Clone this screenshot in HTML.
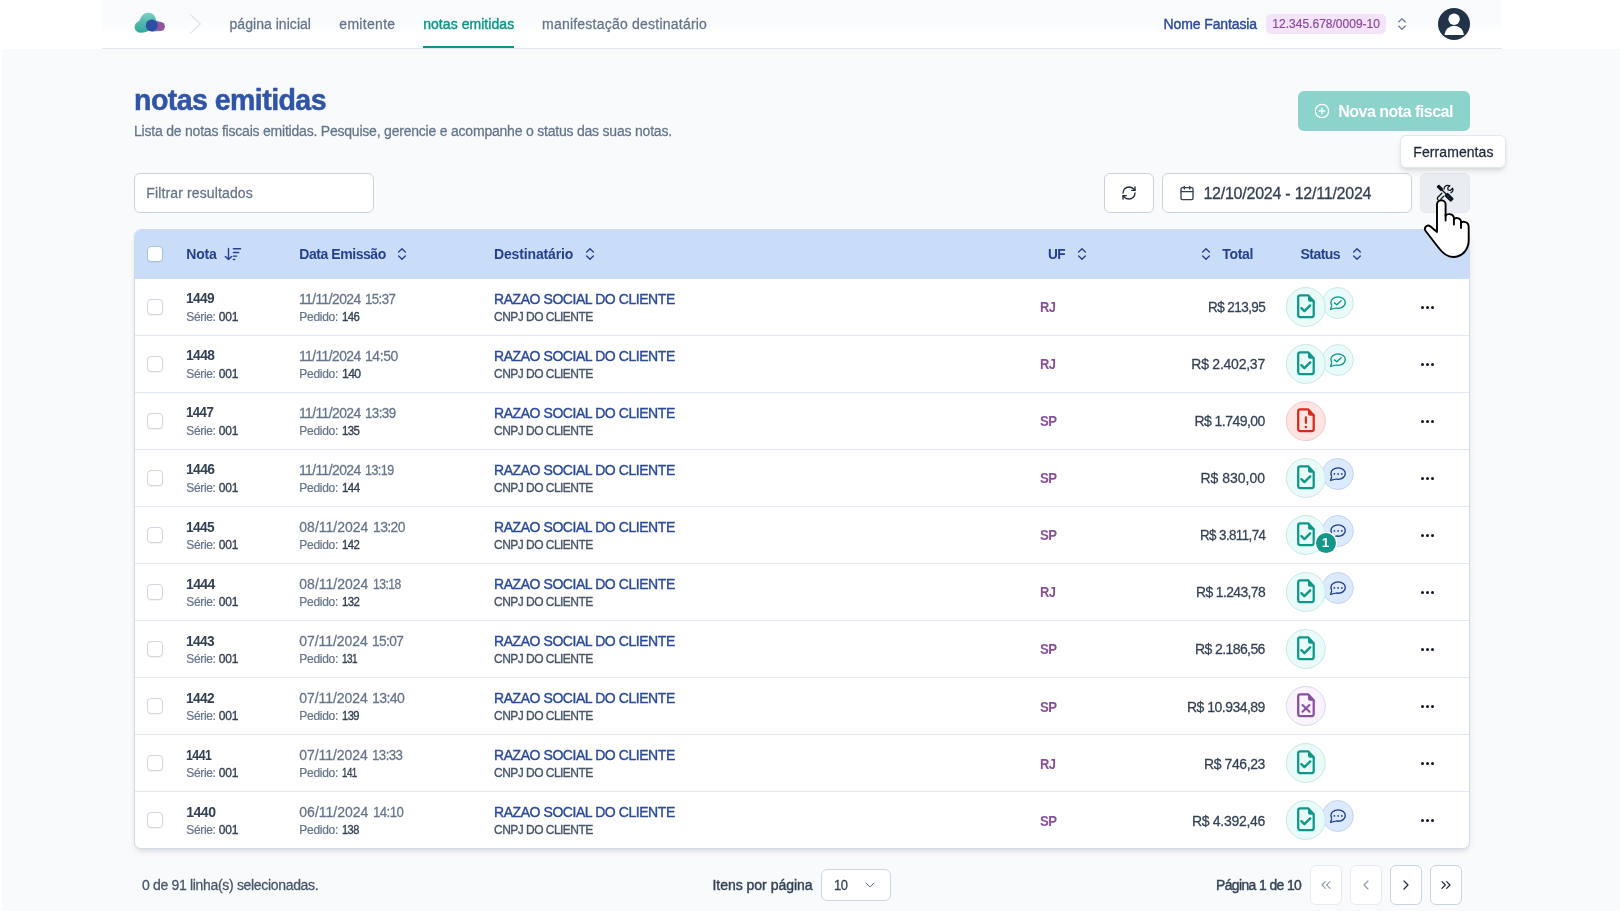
<!DOCTYPE html>
<html lang="pt-BR"><head><meta charset="utf-8"><title>notas emitidas</title>
<style>
*{box-sizing:border-box;margin:0;padding:0}
html,body{width:1620px;height:911px;overflow:hidden;background:#f8fafc;font-family:"Liberation Sans",sans-serif}
#pg{position:absolute;left:0;top:0;width:1620px;height:49px;background:#fff}
#pgl{position:absolute;left:0;top:0;width:2px;height:910px;background:#fff}
#hd{position:absolute;left:102px;top:0;width:1400px;height:49px;background:linear-gradient(#f9fafc 0,#f9fbfd 44%,#fcfdfe 58%,#ffffff 68%);border-bottom:1px solid #e2e8f0}
.t{position:absolute;white-space:nowrap;line-height:1}
.i{position:absolute;overflow:visible}
.box{position:absolute;background:#fff;border:1px solid #c9d3e0;border-radius:6px}
#tbl{position:absolute;left:134px;top:229px;width:1336px;height:620px;background:#fff;border:1px solid #d2dae6;border-radius:7px;box-shadow:0 4px 6px -1px rgba(15,23,42,.08),0 2px 4px -2px rgba(15,23,42,.10);overflow:hidden}
#thd{position:absolute;left:0;top:0;width:100%;height:49px;background:#c9ddf9}
.rb{position:absolute;left:135px;width:1334px;height:1px;background:#e2e8f0}
.cb{position:absolute;width:16px;height:16px;border:1px solid #cfd6e0;border-radius:4px;background:#fff;box-shadow:0 1px 1px rgba(0,0,0,.05)}
.c1{position:absolute;width:40px;height:40px;border-radius:50%;border:1px solid}
.c2{position:absolute;width:31.5px;height:31.5px;border-radius:50%;border:1px solid}
.dot{position:absolute;width:3px;height:3px;border-radius:50%;background:#0f172a}
.bdg{position:absolute;will-change:transform;width:20px;height:20px;color:#fff;font-size:13.500px;font-weight:700;line-height:20px;text-align:center;text-indent:-1px}
</style></head><body>
<div id="pg"></div><div id="pgl"></div>
<div id="hd"></div>
<!-- logo -->
<svg class="i" style="left:132px;top:10px" width="38" height="26" viewBox="132 10 38 26">
<defs><linearGradient id="lg1" x1="0" y1="0" x2="0" y2="1"><stop offset="0" stop-color="#7fd0c7"/><stop offset="0.450" stop-color="#56b9b0"/><stop offset="1" stop-color="#2fa79c"/></linearGradient></defs>
<path d="M148.400,12.800 C152.700,12.800 156,16.200 156,20.400 C156,24 154,27 150.500,29 C148.500,31.500 145,32.800 140.800,32.800 C137.300,32.800 134.600,30.200 134.600,27 C134.600,24.500 136,22.800 138,21.800 C139.500,21 140,19.500 140.600,18 C141.800,14.800 144.800,12.800 148.400,12.800Z" fill="url(#lg1)"/>
<path d="M151.500,19.600 L161,22 L161,31.100 L151.500,31.400Z" fill="#5f7fbd"/>
<circle cx="160.400" cy="26.500" r="4.600" fill="#94559f"/>
<circle cx="151.800" cy="25.400" r="6" fill="#2f4da2"/>
</svg>
<svg class="i" style="left:186px;top:12px" width="20" height="24" viewBox="186 12 20 24" fill="none" stroke="#e2e8f0" stroke-width="1.6" stroke-linecap="round" stroke-linejoin="round"><path d="M190.800,14.800 L200.300,23.900 L190.800,33"/></svg>
<div style="position:absolute;left:423px;top:46px;width:91px;height:2px;background:#0d9488"></div>
<!-- cnpj badge -->
<div style="position:absolute;left:1266px;top:14px;width:120px;height:20px;border-radius:5px;background:#f3e4fb"></div>
<svg class="i" style="left:1394px;top:16px;color:#64748b;" width="16" height="16" viewBox="0 0 24 24" fill="none" stroke="currentColor" stroke-width="1.7" stroke-linecap="round" stroke-linejoin="round"><path d="m7 15 5 5 5-5"/><path d="m7 9 5-5 5 5"/></svg>
<!-- avatar -->
<svg class="i" style="left:1438px;top:8px" width="32" height="32" viewBox="0 0 32 32"><circle cx="16" cy="16" r="16" fill="#233347"/><circle cx="16.100" cy="11.300" r="5.700" fill="#fff"/><path d="M6.500,27 a9.700,9.200 0 0 1 19.400,0z" fill="#fff"/></svg>
<!-- new button -->
<div style="position:absolute;left:1298px;top:91px;width:172px;height:40px;border-radius:6px;background:#8bd3cb"></div>
<svg class="i" style="left:1314px;top:103.4px;color:#ffffff;" width="16" height="16" viewBox="0 0 24 24" fill="none" stroke="currentColor" stroke-width="1.9" stroke-linecap="round" stroke-linejoin="round"><circle cx="12" cy="12" r="10"/><path d="M8 12h8"/><path d="M12 8v8"/></svg>
<!-- filter -->
<div class="box" style="left:134px;top:173px;width:240px;height:40px"></div>
<div class="box" style="left:1104px;top:173px;width:50px;height:40px"></div>
<svg class="i" style="left:1121px;top:185px;color:#1e293b;" width="16" height="16" viewBox="0 0 24 24" fill="none" stroke="currentColor" stroke-width="2" stroke-linecap="round" stroke-linejoin="round"><path d="M3 12a9 9 0 0 1 9-9 9.75 9.75 0 0 1 6.74 2.74L21 8"/><path d="M21 3v5h-5"/><path d="M21 12a9 9 0 0 1-9 9 9.75 9.75 0 0 1-6.74-2.74L3 16"/><path d="M8 16H3v5"/></svg>
<div class="box" style="left:1162px;top:173px;width:250px;height:40px"></div>
<svg class="i" style="left:1179px;top:185px;color:#334155;" width="16" height="16" viewBox="0 0 24 24" fill="none" stroke="currentColor" stroke-width="2" stroke-linecap="round" stroke-linejoin="round"><path d="M8 2v4"/><path d="M16 2v4"/><rect width="18" height="18" x="3" y="4" rx="2"/><path d="M3 10h18"/></svg>
<div style="position:absolute;left:1420px;top:173px;width:50px;height:40px;border-radius:6px;background:#e9edf2;border:1px dotted #dde3eb"></div>
<!-- tools icon -->
<svg class="i" style="left:1437px;top:185px" width="17" height="17" viewBox="0 0 17 17" fill="#0b1220" stroke="none">
<rect x="-3.300" y="-1.750" width="6.600" height="3.500" rx="1" transform="translate(2.900,2.950) rotate(45)"/>
<path d="M5,5 L9.500,9.500" stroke="#0b1220" stroke-width="1.300" fill="none"/>
<rect x="-4.600" y="-2.350" width="9.200" height="4.700" rx="1.200" transform="translate(12.100,12.300) rotate(45)"/>
<circle cx="11.100" cy="11.400" r="0.550" fill="#5b6b82"/><circle cx="13" cy="13.300" r="0.550" fill="#5b6b82"/>
<path d="M7.100,4.100 C6.900,1.900 8.700,0.300 10.800,0.300 C11.600,0.300 12.300,0.400 12.900,0.700 L10.700,2.900 L11.200,5 L13.300,5.500 L15.600,3.300 C16.300,5 15.600,6.900 13.900,7.800" stroke="#0b1220" stroke-width="1.250" fill="none" stroke-linecap="round" stroke-linejoin="round"/>
<path d="M4.800,8.200 L0.700,12.500 C0,13.400 0.300,14.400 1.200,15 M6.700,11.300 L3.700,14.100" stroke="#0b1220" stroke-width="1.250" fill="none" stroke-linecap="round"/>
</svg>
<!-- table -->
<div id="tbl"><div id="thd"></div></div>
<div class="cb" style="left:147px;top:246px;border-color:#a7c3cf"></div>
<svg class="i" style="left:220px;top:244px" width="26" height="20" viewBox="220 244 26 20" fill="none" stroke="#25408f" stroke-width="1.400" stroke-linecap="round" stroke-linejoin="round"><path d="M228.500 248.400V259.400 M225.400 256.500l3.100 3.100 3.100-3.100 M233.400 248.800h7.200 M233.400 252.500h5.300 M233.400 256.100h3.300 M233.400 259.500h1.300"/></svg>
<svg class="i" style="left:394px;top:246px;color:#25408f;" width="16" height="16" viewBox="0 0 24 24" fill="none" stroke="currentColor" stroke-width="2" stroke-linecap="round" stroke-linejoin="round"><path d="m7 15 5 5 5-5"/><path d="m7 9 5-5 5 5"/></svg>
<svg class="i" style="left:582px;top:246px;color:#25408f;" width="16" height="16" viewBox="0 0 24 24" fill="none" stroke="currentColor" stroke-width="2" stroke-linecap="round" stroke-linejoin="round"><path d="m7 15 5 5 5-5"/><path d="m7 9 5-5 5 5"/></svg>
<svg class="i" style="left:1074px;top:246px;color:#25408f;" width="16" height="16" viewBox="0 0 24 24" fill="none" stroke="currentColor" stroke-width="2" stroke-linecap="round" stroke-linejoin="round"><path d="m7 15 5 5 5-5"/><path d="m7 9 5-5 5 5"/></svg>
<svg class="i" style="left:1198px;top:246px;color:#25408f;" width="16" height="16" viewBox="0 0 24 24" fill="none" stroke="currentColor" stroke-width="2" stroke-linecap="round" stroke-linejoin="round"><path d="m7 15 5 5 5-5"/><path d="m7 9 5-5 5 5"/></svg>
<svg class="i" style="left:1349px;top:246px;color:#25408f;" width="16" height="16" viewBox="0 0 24 24" fill="none" stroke="currentColor" stroke-width="2" stroke-linecap="round" stroke-linejoin="round"><path d="m7 15 5 5 5-5"/><path d="m7 9 5-5 5 5"/></svg>
<div class="cb" style="left:147px;top:298.90px"></div>
<svg class="i" style="left:1280px;top:281.80px" width="80" height="50" viewBox="-25.800 -25 80 50"><g transform="translate(32,-4)"><circle r="15.500" fill="#e9fbf8" stroke="#cfe6e6" stroke-width="1"/><g transform="translate(0.300,-0.400)"><ellipse cx="0" cy="0" rx="7.200" ry="5.700" fill="none" stroke="#0d9488" stroke-width="1.350"/><path d="M-6.200,2.600 L-7.600,6.900 L-2.900,5.500" fill="#e9fbf8" stroke="#0d9488" stroke-width="1.250" stroke-linejoin="round" stroke-linecap="round"/><path d="M-5.900,2 L-2.600,5" stroke="#e9fbf8" stroke-width="1.600" fill="none"/><path d="M-3.700,0.300 L-1.300,2.200 L3,-1.800" fill="none" stroke="#0d9488" stroke-width="1.350" stroke-linecap="round" stroke-linejoin="round"/></g></g><circle r="19.500" fill="#e9fbf8" stroke="#cde6e6" stroke-width="1"/><path d="M2.300,-11.700 H-5.600 a2,2 0 0 0 -2,2 V8.100 a2,2 0 0 0 2,2 H5.900 a2,2 0 0 0 2,-2 V-5.700 Z" fill="none" stroke="#11968a" stroke-width="2.250" stroke-linejoin="round"/><path d="M2.200,-12.300 L8.700,-5.700 V-5.300 H4 a1.800,1.800 0 0 1 -1.800,-1.800 Z" fill="#11968a"/><path d="M-4.400,1.200 L-1.400,4.100 L4.400,-1.600" fill="none" stroke="#11968a" stroke-width="2.400" stroke-linecap="round" stroke-linejoin="round"/></svg>
<div class="dot" style="left:1420.50px;top:306px"></div>
<div class="dot" style="left:1425.50px;top:306px"></div>
<div class="dot" style="left:1430.50px;top:306px"></div>
<div class="rb" style="top:334.78px"></div>
<div class="cb" style="left:147px;top:355.93px"></div>
<svg class="i" style="left:1280px;top:338.83px" width="80" height="50" viewBox="-25.800 -25 80 50"><g transform="translate(32,-4)"><circle r="15.500" fill="#e9fbf8" stroke="#cfe6e6" stroke-width="1"/><g transform="translate(0.300,-0.400)"><ellipse cx="0" cy="0" rx="7.200" ry="5.700" fill="none" stroke="#0d9488" stroke-width="1.350"/><path d="M-6.200,2.600 L-7.600,6.900 L-2.900,5.500" fill="#e9fbf8" stroke="#0d9488" stroke-width="1.250" stroke-linejoin="round" stroke-linecap="round"/><path d="M-5.900,2 L-2.600,5" stroke="#e9fbf8" stroke-width="1.600" fill="none"/><path d="M-3.700,0.300 L-1.300,2.200 L3,-1.800" fill="none" stroke="#0d9488" stroke-width="1.350" stroke-linecap="round" stroke-linejoin="round"/></g></g><circle r="19.500" fill="#e9fbf8" stroke="#cde6e6" stroke-width="1"/><path d="M2.300,-11.700 H-5.600 a2,2 0 0 0 -2,2 V8.100 a2,2 0 0 0 2,2 H5.900 a2,2 0 0 0 2,-2 V-5.700 Z" fill="none" stroke="#11968a" stroke-width="2.250" stroke-linejoin="round"/><path d="M2.200,-12.300 L8.700,-5.700 V-5.300 H4 a1.800,1.800 0 0 1 -1.800,-1.800 Z" fill="#11968a"/><path d="M-4.400,1.200 L-1.400,4.100 L4.400,-1.600" fill="none" stroke="#11968a" stroke-width="2.400" stroke-linecap="round" stroke-linejoin="round"/></svg>
<div class="dot" style="left:1420.50px;top:363px"></div>
<div class="dot" style="left:1425.50px;top:363px"></div>
<div class="dot" style="left:1430.50px;top:363px"></div>
<div class="rb" style="top:391.81px"></div>
<div class="cb" style="left:147px;top:412.96px"></div>
<svg class="i" style="left:1280px;top:395.86px" width="80" height="50" viewBox="-25.800 -25 80 50"><circle r="19.500" fill="#ffe4e4" stroke="#f1c9cb" stroke-width="1"/><path d="M2.300,-11.700 H-5.600 a2,2 0 0 0 -2,2 V8.100 a2,2 0 0 0 2,2 H5.900 a2,2 0 0 0 2,-2 V-5.700 Z" fill="none" stroke="#d42a1c" stroke-width="2.250" stroke-linejoin="round"/><path d="M2.200,-12.300 L8.700,-5.700 V-5.300 H4 a1.800,1.800 0 0 1 -1.800,-1.800 Z" fill="#d42a1c"/><path d="M0.100,-3.600 V2" fill="none" stroke="#d42a1c" stroke-width="2.100" stroke-linecap="round"/><circle cx="0.100" cy="5.900" r="1.250" fill="#d42a1c"/></svg>
<div class="dot" style="left:1420.50px;top:420px"></div>
<div class="dot" style="left:1425.50px;top:420px"></div>
<div class="dot" style="left:1430.50px;top:420px"></div>
<div class="rb" style="top:448.84px"></div>
<div class="cb" style="left:147px;top:469.99px"></div>
<svg class="i" style="left:1280px;top:452.89px" width="80" height="50" viewBox="-25.800 -25 80 50"><g transform="translate(32,-4)"><circle r="15.500" fill="#dbeafe" stroke="#c6d4ea" stroke-width="1"/><g transform="translate(0.300,-0.400)"><ellipse cx="0" cy="0" rx="7.200" ry="5.700" fill="none" stroke="#1e3a8a" stroke-width="1.350"/><path d="M-6.200,2.600 L-7.600,6.900 L-2.900,5.500" fill="#dbeafe" stroke="#1e3a8a" stroke-width="1.250" stroke-linejoin="round" stroke-linecap="round"/><path d="M-5.900,2 L-2.600,5" stroke="#dbeafe" stroke-width="1.600" fill="none"/><circle cx="-3.7" cy="0.300" r="0.850" fill="#1e3a8a"/><circle cx="0" cy="0.300" r="0.850" fill="#1e3a8a"/><circle cx="3.7" cy="0.300" r="0.850" fill="#1e3a8a"/></g></g><circle r="19.500" fill="#e9fbf8" stroke="#cde6e6" stroke-width="1"/><path d="M2.300,-11.700 H-5.600 a2,2 0 0 0 -2,2 V8.100 a2,2 0 0 0 2,2 H5.900 a2,2 0 0 0 2,-2 V-5.700 Z" fill="none" stroke="#11968a" stroke-width="2.250" stroke-linejoin="round"/><path d="M2.200,-12.300 L8.700,-5.700 V-5.300 H4 a1.800,1.800 0 0 1 -1.800,-1.800 Z" fill="#11968a"/><path d="M-4.400,1.200 L-1.400,4.100 L4.400,-1.600" fill="none" stroke="#11968a" stroke-width="2.400" stroke-linecap="round" stroke-linejoin="round"/></svg>
<div class="dot" style="left:1420.50px;top:477px"></div>
<div class="dot" style="left:1425.50px;top:477px"></div>
<div class="dot" style="left:1430.50px;top:477px"></div>
<div class="rb" style="top:505.87px"></div>
<div class="cb" style="left:147px;top:527.02px"></div>
<svg class="i" style="left:1280px;top:509.92px" width="80" height="50" viewBox="-25.800 -25 80 50"><g transform="translate(32,-4)"><circle r="15.500" fill="#dbeafe" stroke="#c6d4ea" stroke-width="1"/><g transform="translate(0.300,-0.400)"><ellipse cx="0" cy="0" rx="7.200" ry="5.700" fill="none" stroke="#1e3a8a" stroke-width="1.350"/><path d="M-6.200,2.600 L-7.600,6.900 L-2.900,5.500" fill="#dbeafe" stroke="#1e3a8a" stroke-width="1.250" stroke-linejoin="round" stroke-linecap="round"/><path d="M-5.900,2 L-2.600,5" stroke="#dbeafe" stroke-width="1.600" fill="none"/><circle cx="-3.7" cy="0.300" r="0.850" fill="#1e3a8a"/><circle cx="0" cy="0.300" r="0.850" fill="#1e3a8a"/><circle cx="3.7" cy="0.300" r="0.850" fill="#1e3a8a"/></g></g><circle r="19.500" fill="#e9fbf8" stroke="#cde6e6" stroke-width="1"/><path d="M2.300,-11.700 H-5.600 a2,2 0 0 0 -2,2 V8.100 a2,2 0 0 0 2,2 H5.900 a2,2 0 0 0 2,-2 V-5.700 Z" fill="none" stroke="#11968a" stroke-width="2.250" stroke-linejoin="round"/><path d="M2.200,-12.300 L8.700,-5.700 V-5.300 H4 a1.800,1.800 0 0 1 -1.800,-1.800 Z" fill="#11968a"/><path d="M-4.400,1.200 L-1.400,4.100 L4.400,-1.600" fill="none" stroke="#11968a" stroke-width="2.400" stroke-linecap="round" stroke-linejoin="round"/><circle cx="20.200" cy="8.100" r="11.300" fill="#fff"/><circle cx="20.200" cy="8.100" r="10" fill="#14968a"/></svg>
<div class="bdg" style="left:1316px;top:533.02px">1</div>
<div class="dot" style="left:1420.50px;top:534px"></div>
<div class="dot" style="left:1425.50px;top:534px"></div>
<div class="dot" style="left:1430.50px;top:534px"></div>
<div class="rb" style="top:562.90px"></div>
<div class="cb" style="left:147px;top:584.05px"></div>
<svg class="i" style="left:1280px;top:566.95px" width="80" height="50" viewBox="-25.800 -25 80 50"><g transform="translate(32,-4)"><circle r="15.500" fill="#dbeafe" stroke="#c6d4ea" stroke-width="1"/><g transform="translate(0.300,-0.400)"><ellipse cx="0" cy="0" rx="7.200" ry="5.700" fill="none" stroke="#1e3a8a" stroke-width="1.350"/><path d="M-6.200,2.600 L-7.600,6.900 L-2.900,5.500" fill="#dbeafe" stroke="#1e3a8a" stroke-width="1.250" stroke-linejoin="round" stroke-linecap="round"/><path d="M-5.900,2 L-2.600,5" stroke="#dbeafe" stroke-width="1.600" fill="none"/><circle cx="-3.7" cy="0.300" r="0.850" fill="#1e3a8a"/><circle cx="0" cy="0.300" r="0.850" fill="#1e3a8a"/><circle cx="3.7" cy="0.300" r="0.850" fill="#1e3a8a"/></g></g><circle r="19.500" fill="#e9fbf8" stroke="#cde6e6" stroke-width="1"/><path d="M2.300,-11.700 H-5.600 a2,2 0 0 0 -2,2 V8.100 a2,2 0 0 0 2,2 H5.900 a2,2 0 0 0 2,-2 V-5.700 Z" fill="none" stroke="#11968a" stroke-width="2.250" stroke-linejoin="round"/><path d="M2.200,-12.300 L8.700,-5.700 V-5.300 H4 a1.800,1.800 0 0 1 -1.800,-1.800 Z" fill="#11968a"/><path d="M-4.400,1.200 L-1.400,4.100 L4.400,-1.600" fill="none" stroke="#11968a" stroke-width="2.400" stroke-linecap="round" stroke-linejoin="round"/></svg>
<div class="dot" style="left:1420.50px;top:591px"></div>
<div class="dot" style="left:1425.50px;top:591px"></div>
<div class="dot" style="left:1430.50px;top:591px"></div>
<div class="rb" style="top:619.93px"></div>
<div class="cb" style="left:147px;top:641.08px"></div>
<svg class="i" style="left:1280px;top:623.98px" width="80" height="50" viewBox="-25.800 -25 80 50"><circle r="19.500" fill="#e9fbf8" stroke="#cde6e6" stroke-width="1"/><path d="M2.300,-11.700 H-5.600 a2,2 0 0 0 -2,2 V8.100 a2,2 0 0 0 2,2 H5.900 a2,2 0 0 0 2,-2 V-5.700 Z" fill="none" stroke="#11968a" stroke-width="2.250" stroke-linejoin="round"/><path d="M2.200,-12.300 L8.700,-5.700 V-5.300 H4 a1.800,1.800 0 0 1 -1.800,-1.800 Z" fill="#11968a"/><path d="M-4.400,1.200 L-1.400,4.100 L4.400,-1.600" fill="none" stroke="#11968a" stroke-width="2.400" stroke-linecap="round" stroke-linejoin="round"/></svg>
<div class="dot" style="left:1420.50px;top:648px"></div>
<div class="dot" style="left:1425.50px;top:648px"></div>
<div class="dot" style="left:1430.50px;top:648px"></div>
<div class="rb" style="top:676.96px"></div>
<div class="cb" style="left:147px;top:698.11px"></div>
<svg class="i" style="left:1280px;top:681.01px" width="80" height="50" viewBox="-25.800 -25 80 50"><circle r="19.500" fill="#faf3fe" stroke="#d6dbe8" stroke-width="1"/><path d="M2.300,-11.700 H-5.600 a2,2 0 0 0 -2,2 V8.100 a2,2 0 0 0 2,2 H5.900 a2,2 0 0 0 2,-2 V-5.700 Z" fill="none" stroke="#87509e" stroke-width="2.250" stroke-linejoin="round"/><path d="M2.200,-12.300 L8.700,-5.700 V-5.300 H4 a1.800,1.800 0 0 1 -1.800,-1.800 Z" fill="#87509e"/><path d="M-3.300,-0.900 L3.700,5.700 M3.700,-0.900 L-3.300,5.700" fill="none" stroke="#87509e" stroke-width="2.100" stroke-linecap="round"/></svg>
<div class="dot" style="left:1420.50px;top:705px"></div>
<div class="dot" style="left:1425.50px;top:705px"></div>
<div class="dot" style="left:1430.50px;top:705px"></div>
<div class="rb" style="top:733.99px"></div>
<div class="cb" style="left:147px;top:755.14px"></div>
<svg class="i" style="left:1280px;top:738.04px" width="80" height="50" viewBox="-25.800 -25 80 50"><circle r="19.500" fill="#e9fbf8" stroke="#cde6e6" stroke-width="1"/><path d="M2.300,-11.700 H-5.600 a2,2 0 0 0 -2,2 V8.100 a2,2 0 0 0 2,2 H5.900 a2,2 0 0 0 2,-2 V-5.700 Z" fill="none" stroke="#11968a" stroke-width="2.250" stroke-linejoin="round"/><path d="M2.200,-12.300 L8.700,-5.700 V-5.300 H4 a1.800,1.800 0 0 1 -1.800,-1.800 Z" fill="#11968a"/><path d="M-4.400,1.200 L-1.400,4.100 L4.400,-1.600" fill="none" stroke="#11968a" stroke-width="2.400" stroke-linecap="round" stroke-linejoin="round"/></svg>
<div class="dot" style="left:1420.50px;top:762px"></div>
<div class="dot" style="left:1425.50px;top:762px"></div>
<div class="dot" style="left:1430.50px;top:762px"></div>
<div class="rb" style="top:791.02px"></div>
<div class="cb" style="left:147px;top:812.17px"></div>
<svg class="i" style="left:1280px;top:795.07px" width="80" height="50" viewBox="-25.800 -25 80 50"><g transform="translate(32,-4)"><circle r="15.500" fill="#dbeafe" stroke="#c6d4ea" stroke-width="1"/><g transform="translate(0.300,-0.400)"><ellipse cx="0" cy="0" rx="7.200" ry="5.700" fill="none" stroke="#1e3a8a" stroke-width="1.350"/><path d="M-6.200,2.600 L-7.600,6.900 L-2.900,5.500" fill="#dbeafe" stroke="#1e3a8a" stroke-width="1.250" stroke-linejoin="round" stroke-linecap="round"/><path d="M-5.900,2 L-2.600,5" stroke="#dbeafe" stroke-width="1.600" fill="none"/><circle cx="-3.7" cy="0.300" r="0.850" fill="#1e3a8a"/><circle cx="0" cy="0.300" r="0.850" fill="#1e3a8a"/><circle cx="3.7" cy="0.300" r="0.850" fill="#1e3a8a"/></g></g><circle r="19.500" fill="#e9fbf8" stroke="#cde6e6" stroke-width="1"/><path d="M2.300,-11.700 H-5.600 a2,2 0 0 0 -2,2 V8.100 a2,2 0 0 0 2,2 H5.900 a2,2 0 0 0 2,-2 V-5.700 Z" fill="none" stroke="#11968a" stroke-width="2.250" stroke-linejoin="round"/><path d="M2.200,-12.300 L8.700,-5.700 V-5.300 H4 a1.800,1.800 0 0 1 -1.800,-1.800 Z" fill="#11968a"/><path d="M-4.400,1.200 L-1.400,4.100 L4.400,-1.600" fill="none" stroke="#11968a" stroke-width="2.400" stroke-linecap="round" stroke-linejoin="round"/></svg>
<div class="dot" style="left:1420.50px;top:819px"></div>
<div class="dot" style="left:1425.50px;top:819px"></div>
<div class="dot" style="left:1430.50px;top:819px"></div>
<!-- footer -->
<div class="box" style="left:821px;top:869px;width:70px;height:32px;border-color:#cdd6e2"></div>
<svg class="i" style="left:862px;top:877px;color:#64748b;" width="16" height="16" viewBox="0 0 24 24" fill="none" stroke="currentColor" stroke-width="1.5" stroke-linecap="round" stroke-linejoin="round"><path d="m6 9 6 6 6-6"/></svg>
<div class="box" style="left:1310px;top:865px;width:32px;height:40px;border-color:#e6ebf2"></div>
<div class="box" style="left:1350px;top:865px;width:32px;height:40px;border-color:#e6ebf2"></div>
<div class="box" style="left:1390px;top:865px;width:32px;height:40px;border-color:#cad3e0"></div>
<div class="box" style="left:1430px;top:865px;width:32px;height:40px;border-color:#cad3e0"></div>
<svg class="i" style="left:1318px;top:877px;color:#8d99aa;" width="16" height="16" viewBox="0 0 24 24" fill="none" stroke="currentColor" stroke-width="1.6" stroke-linecap="round" stroke-linejoin="round"><path d="m11 17-5-5 5-5"/><path d="m18 17-5-5 5-5"/></svg>
<svg class="i" style="left:1358px;top:877px;color:#8d99aa;" width="16" height="16" viewBox="0 0 24 24" fill="none" stroke="currentColor" stroke-width="1.6" stroke-linecap="round" stroke-linejoin="round"><path d="m15 18-6-6 6-6"/></svg>
<svg class="i" style="left:1398px;top:877px;color:#1e293b;" width="16" height="16" viewBox="0 0 24 24" fill="none" stroke="currentColor" stroke-width="1.8" stroke-linecap="round" stroke-linejoin="round"><path d="m9 18 6-6-6-6"/></svg>
<svg class="i" style="left:1438px;top:877px;color:#1e293b;" width="16" height="16" viewBox="0 0 24 24" fill="none" stroke="currentColor" stroke-width="1.8" stroke-linecap="round" stroke-linejoin="round"><path d="m6 17 5-5-5-5"/><path d="m13 17 5-5-5-5"/></svg>
<!-- tooltip -->
<div style="position:absolute;left:1400px;top:135px;width:106px;height:33px;border-radius:6px;background:#fff;border:1px solid #e2e8f0;box-shadow:0 4px 6px -1px rgba(0,0,0,.10),0 2px 4px -2px rgba(0,0,0,.10)"></div>
<div id="tx" style="position:absolute;left:0;top:0;width:1620px;height:911px;will-change:transform">
<div class="t" id="n1" style="left:229.50px;top:17.15px;font-size:14px;font-weight:400;color:#64748b;letter-spacing:0.041px;-webkit-text-stroke:0.252px currentColor;">página inicial</div>
<div class="t" id="n2" style="left:339.30px;top:17.15px;font-size:14px;font-weight:400;color:#64748b;letter-spacing:0.306px;-webkit-text-stroke:0.252px currentColor;">emitente</div>
<div class="t" id="n3" style="left:423.20px;top:17.15px;font-size:14px;font-weight:400;color:#0d9488;letter-spacing:0.053px;-webkit-text-stroke:0.392px currentColor;">notas emitidas</div>
<div class="t" id="n4" style="left:542.00px;top:17.15px;font-size:14px;font-weight:400;color:#64748b;letter-spacing:0.223px;-webkit-text-stroke:0.252px currentColor;">manifestação destinatário</div>
<div class="t" id="nf" style="left:1163.60px;top:17.15px;font-size:14px;font-weight:400;color:#2a4a9c;letter-spacing:-0.123px;-webkit-text-stroke:0.392px currentColor;">Nome Fantasia</div>
<div class="t" id="cn" style="left:1272.30px;top:17.84px;font-size:12px;font-weight:400;color:#8a4a9a;letter-spacing:0.015px;-webkit-text-stroke:0.216px currentColor;">12.345.678/0009-10</div>
<div class="t" id="h1" style="left:134.00px;top:84.61px;font-size:30px;font-weight:700;color:#3155a6;letter-spacing:-0.600px;transform:scaleX(0.9521);transform-origin:0 0;-webkit-text-stroke:0.500px currentColor;">notas emitidas</div>
<div class="t" id="sub" style="left:134.00px;top:123.65px;font-size:14px;font-weight:400;color:#64748b;letter-spacing:-0.211px;-webkit-text-stroke:0.252px currentColor;">Lista de notas fiscais emitidas. Pesquise, gerencie e acompanhe o status das suas notas.</div>
<div class="t" id="btn" style="left:1338.20px;top:103.66px;font-size:16px;font-weight:700;color:#ffffff;letter-spacing:-0.497px;">Nova nota fiscal</div>
<div class="t" id="tip" style="left:1413.30px;top:145.35px;font-size:14px;font-weight:400;color:#1e293b;letter-spacing:0.080px;-webkit-text-stroke:0.252px currentColor;">Ferramentas</div>
<div class="t" id="flt" style="left:146.30px;top:186.15px;font-size:14px;font-weight:400;color:#64748b;letter-spacing:0.128px;-webkit-text-stroke:0.252px currentColor;">Filtrar resultados</div>
<div class="t" id="date" style="left:1203.40px;top:185.86px;font-size:16px;font-weight:400;color:#334155;letter-spacing:-0.231px;-webkit-text-stroke:0.288px currentColor;">12/10/2024 - 12/11/2024</div>
<div class="t" id="th1" style="left:186.30px;top:247.05px;font-size:14px;font-weight:700;color:#25408f;letter-spacing:-0.236px;">Nota</div>
<div class="t" id="th2" style="left:299.30px;top:247.05px;font-size:14px;font-weight:700;color:#25408f;letter-spacing:-0.446px;">Data Emissão</div>
<div class="t" id="th3" style="left:494.00px;top:247.05px;font-size:14px;font-weight:700;color:#25408f;letter-spacing:-0.141px;">Destinatário</div>
<div class="t" id="th4" style="left:1048.00px;top:247.05px;font-size:14px;font-weight:700;color:#25408f;letter-spacing:-0.600px;transform:scaleX(0.9730);transform-origin:0 0;">UF</div>
<div class="t" id="th5" style="left:1222.20px;top:247.05px;font-size:14px;font-weight:700;color:#25408f;letter-spacing:-0.290px;">Total</div>
<div class="t" id="th6" style="left:1300.50px;top:247.05px;font-size:14px;font-weight:700;color:#25408f;letter-spacing:-0.545px;">Status</div>
<div class="t" id="f1" style="left:142.00px;top:878.15px;font-size:14px;font-weight:400;color:#475569;letter-spacing:-0.323px;-webkit-text-stroke:0.252px currentColor;">0 de 91 linha(s) selecionadas.</div>
<div class="t" id="f2" style="left:712.40px;top:878.25px;font-size:14px;font-weight:400;color:#334155;letter-spacing:-0.013px;-webkit-text-stroke:0.392px currentColor;">Itens por página</div>
<div class="t" id="f3" style="left:834.20px;top:878.25px;font-size:14px;font-weight:400;color:#334155;letter-spacing:-0.600px;transform:scaleX(0.9250);transform-origin:0 0;-webkit-text-stroke:0.252px currentColor;">10</div>
<div class="t" id="f4" style="left:1215.60px;top:878.15px;font-size:14px;font-weight:400;color:#334155;letter-spacing:-0.600px;transform:scaleX(0.9930);transform-origin:0 0;-webkit-text-stroke:0.392px currentColor;">Página 1 de 10</div>
<div class="t" id="r0a" style="left:186.30px;top:291.40px;font-size:14px;font-weight:700;color:#334155;letter-spacing:-0.600px;transform:scaleX(0.9772);transform-origin:0 0;">1449</div>
<div class="t" id="r0b" style="left:186.30px;top:311.09px;font-size:12px;font-weight:400;color:#64748b;letter-spacing:-0.356px;-webkit-text-stroke:0.216px currentColor;">Série:</div>
<div class="t" id="r0b2" style="left:218.80px;top:311.09px;font-size:12px;font-weight:400;color:#334155;letter-spacing:-0.212px;-webkit-text-stroke:0.336px currentColor;">001</div>
<div class="t" id="r0c" style="left:299.30px;top:292.10px;font-size:14px;font-weight:400;color:#64748b;letter-spacing:-0.600px;transform:scaleX(0.9935);transform-origin:0 0;-webkit-text-stroke:0.252px currentColor;">11/11/2024</div>
<div class="t" id="r0c2" style="left:365.00px;top:292.10px;font-size:14px;font-weight:400;color:#64748b;letter-spacing:-0.600px;transform:scaleX(0.9455);transform-origin:0 0;-webkit-text-stroke:0.252px currentColor;">15:37</div>
<div class="t" id="r0d" style="left:299.30px;top:311.09px;font-size:12px;font-weight:400;color:#64748b;letter-spacing:-0.293px;-webkit-text-stroke:0.216px currentColor;">Pedido:</div>
<div class="t" id="r0d2" style="left:342.00px;top:311.09px;font-size:12px;font-weight:400;color:#334155;letter-spacing:-0.600px;transform:scaleX(0.9489);transform-origin:0 0;-webkit-text-stroke:0.336px currentColor;">146</div>
<div class="t" id="r0e" style="left:494.00px;top:292.10px;font-size:14px;font-weight:400;color:#2a4a9c;letter-spacing:-0.438px;-webkit-text-stroke:0.392px currentColor;">RAZAO SOCIAL DO CLIENTE</div>
<div class="t" id="r0f" style="left:494.00px;top:311.09px;font-size:12px;font-weight:400;color:#475569;letter-spacing:-0.530px;-webkit-text-stroke:0.336px currentColor;">CNPJ DO CLIENTE</div>
<div class="t" id="r0g" style="left:1039.50px;top:300.30px;font-size:14px;font-weight:700;color:#8a4f9c;letter-spacing:-0.600px;transform:scaleX(0.9218);transform-origin:0 0;">RJ</div>
<div class="t" id="r0h" style="left:1207.90px;top:300.30px;font-size:14px;font-weight:400;color:#334155;letter-spacing:-0.600px;transform:scaleX(0.9661);transform-origin:0 0;-webkit-text-stroke:0.252px currentColor;">R$ 213,95</div>
<div class="t" id="r1a" style="left:186.30px;top:348.43px;font-size:14px;font-weight:700;color:#334155;letter-spacing:-0.600px;transform:scaleX(0.9876);transform-origin:0 0;">1448</div>
<div class="t" id="r1b" style="left:186.30px;top:368.12px;font-size:12px;font-weight:400;color:#64748b;letter-spacing:-0.356px;-webkit-text-stroke:0.216px currentColor;">Série:</div>
<div class="t" id="r1b2" style="left:218.80px;top:368.12px;font-size:12px;font-weight:400;color:#334155;letter-spacing:-0.212px;-webkit-text-stroke:0.336px currentColor;">001</div>
<div class="t" id="r1c" style="left:299.30px;top:349.13px;font-size:14px;font-weight:400;color:#64748b;letter-spacing:-0.600px;transform:scaleX(0.9935);transform-origin:0 0;-webkit-text-stroke:0.252px currentColor;">11/11/2024</div>
<div class="t" id="r1c2" style="left:365.00px;top:349.13px;font-size:14px;font-weight:400;color:#64748b;letter-spacing:-0.433px;-webkit-text-stroke:0.252px currentColor;">14:50</div>
<div class="t" id="r1d" style="left:299.30px;top:368.12px;font-size:12px;font-weight:400;color:#64748b;letter-spacing:-0.293px;-webkit-text-stroke:0.216px currentColor;">Pedido:</div>
<div class="t" id="r1d2" style="left:342.00px;top:368.12px;font-size:12px;font-weight:400;color:#334155;letter-spacing:-0.600px;transform:scaleX(1.0147);transform-origin:0 0;-webkit-text-stroke:0.336px currentColor;">140</div>
<div class="t" id="r1e" style="left:494.00px;top:349.13px;font-size:14px;font-weight:400;color:#2a4a9c;letter-spacing:-0.438px;-webkit-text-stroke:0.392px currentColor;">RAZAO SOCIAL DO CLIENTE</div>
<div class="t" id="r1f" style="left:494.00px;top:368.12px;font-size:12px;font-weight:400;color:#475569;letter-spacing:-0.530px;-webkit-text-stroke:0.336px currentColor;">CNPJ DO CLIENTE</div>
<div class="t" id="r1g" style="left:1039.50px;top:357.33px;font-size:14px;font-weight:700;color:#8a4f9c;letter-spacing:-0.600px;transform:scaleX(0.9218);transform-origin:0 0;">RJ</div>
<div class="t" id="r1h" style="left:1191.30px;top:357.33px;font-size:14px;font-weight:400;color:#334155;letter-spacing:-0.238px;-webkit-text-stroke:0.252px currentColor;">R$ 2.402,37</div>
<div class="t" id="r2a" style="left:186.30px;top:405.46px;font-size:14px;font-weight:700;color:#334155;letter-spacing:-0.600px;transform:scaleX(0.9459);transform-origin:0 0;">1447</div>
<div class="t" id="r2b" style="left:186.30px;top:425.15px;font-size:12px;font-weight:400;color:#64748b;letter-spacing:-0.356px;-webkit-text-stroke:0.216px currentColor;">Série:</div>
<div class="t" id="r2b2" style="left:218.80px;top:425.15px;font-size:12px;font-weight:400;color:#334155;letter-spacing:-0.212px;-webkit-text-stroke:0.336px currentColor;">001</div>
<div class="t" id="r2c" style="left:299.30px;top:406.16px;font-size:14px;font-weight:400;color:#64748b;letter-spacing:-0.600px;transform:scaleX(0.9935);transform-origin:0 0;-webkit-text-stroke:0.252px currentColor;">11/11/2024</div>
<div class="t" id="r2c2" style="left:365.00px;top:406.16px;font-size:14px;font-weight:400;color:#64748b;letter-spacing:-0.600px;transform:scaleX(0.9549);transform-origin:0 0;-webkit-text-stroke:0.252px currentColor;">13:39</div>
<div class="t" id="r2d" style="left:299.30px;top:425.15px;font-size:12px;font-weight:400;color:#64748b;letter-spacing:-0.293px;-webkit-text-stroke:0.216px currentColor;">Pedido:</div>
<div class="t" id="r2d2" style="left:342.00px;top:425.15px;font-size:12px;font-weight:400;color:#334155;letter-spacing:-0.600px;transform:scaleX(0.9489);transform-origin:0 0;-webkit-text-stroke:0.336px currentColor;">135</div>
<div class="t" id="r2e" style="left:494.00px;top:406.16px;font-size:14px;font-weight:400;color:#2a4a9c;letter-spacing:-0.438px;-webkit-text-stroke:0.392px currentColor;">RAZAO SOCIAL DO CLIENTE</div>
<div class="t" id="r2f" style="left:494.00px;top:425.15px;font-size:12px;font-weight:400;color:#475569;letter-spacing:-0.530px;-webkit-text-stroke:0.336px currentColor;">CNPJ DO CLIENTE</div>
<div class="t" id="r2g" style="left:1039.50px;top:414.36px;font-size:14px;font-weight:700;color:#8a4f9c;letter-spacing:-0.600px;transform:scaleX(0.9435);transform-origin:0 0;">SP</div>
<div class="t" id="r2h" style="left:1194.40px;top:414.36px;font-size:14px;font-weight:400;color:#334155;letter-spacing:-0.533px;-webkit-text-stroke:0.252px currentColor;">R$ 1.749,00</div>
<div class="t" id="r3a" style="left:186.30px;top:462.49px;font-size:14px;font-weight:700;color:#334155;letter-spacing:-0.600px;transform:scaleX(0.9876);transform-origin:0 0;">1446</div>
<div class="t" id="r3b" style="left:186.30px;top:482.18px;font-size:12px;font-weight:400;color:#64748b;letter-spacing:-0.356px;-webkit-text-stroke:0.216px currentColor;">Série:</div>
<div class="t" id="r3b2" style="left:218.80px;top:482.18px;font-size:12px;font-weight:400;color:#334155;letter-spacing:-0.212px;-webkit-text-stroke:0.336px currentColor;">001</div>
<div class="t" id="r3c" style="left:299.30px;top:463.19px;font-size:14px;font-weight:400;color:#64748b;letter-spacing:-0.600px;transform:scaleX(0.9935);transform-origin:0 0;-webkit-text-stroke:0.252px currentColor;">11/11/2024</div>
<div class="t" id="r3c2" style="left:365.00px;top:463.19px;font-size:14px;font-weight:400;color:#64748b;letter-spacing:-0.600px;transform:scaleX(0.8956);transform-origin:0 0;-webkit-text-stroke:0.252px currentColor;">13:19</div>
<div class="t" id="r3d" style="left:299.30px;top:482.18px;font-size:12px;font-weight:400;color:#64748b;letter-spacing:-0.293px;-webkit-text-stroke:0.216px currentColor;">Pedido:</div>
<div class="t" id="r3d2" style="left:342.00px;top:482.18px;font-size:12px;font-weight:400;color:#334155;letter-spacing:-0.600px;transform:scaleX(0.9654);transform-origin:0 0;-webkit-text-stroke:0.336px currentColor;">144</div>
<div class="t" id="r3e" style="left:494.00px;top:463.19px;font-size:14px;font-weight:400;color:#2a4a9c;letter-spacing:-0.438px;-webkit-text-stroke:0.392px currentColor;">RAZAO SOCIAL DO CLIENTE</div>
<div class="t" id="r3f" style="left:494.00px;top:482.18px;font-size:12px;font-weight:400;color:#475569;letter-spacing:-0.530px;-webkit-text-stroke:0.336px currentColor;">CNPJ DO CLIENTE</div>
<div class="t" id="r3g" style="left:1039.50px;top:471.39px;font-size:14px;font-weight:700;color:#8a4f9c;letter-spacing:-0.600px;transform:scaleX(0.9435);transform-origin:0 0;">SP</div>
<div class="t" id="r3h" style="left:1200.40px;top:471.39px;font-size:14px;font-weight:400;color:#334155;letter-spacing:0.011px;-webkit-text-stroke:0.252px currentColor;">R$ 830,00</div>
<div class="t" id="r4a" style="left:186.30px;top:519.52px;font-size:14px;font-weight:700;color:#334155;letter-spacing:-0.600px;transform:scaleX(0.9772);transform-origin:0 0;">1445</div>
<div class="t" id="r4b" style="left:186.30px;top:539.21px;font-size:12px;font-weight:400;color:#64748b;letter-spacing:-0.356px;-webkit-text-stroke:0.216px currentColor;">Série:</div>
<div class="t" id="r4b2" style="left:218.80px;top:539.21px;font-size:12px;font-weight:400;color:#334155;letter-spacing:-0.212px;-webkit-text-stroke:0.336px currentColor;">001</div>
<div class="t" id="r4c" style="left:299.30px;top:520.22px;font-size:14px;font-weight:400;color:#64748b;letter-spacing:0.007px;-webkit-text-stroke:0.252px currentColor;">08/11/2024</div>
<div class="t" id="r4c2" style="left:372.50px;top:520.22px;font-size:14px;font-weight:400;color:#64748b;letter-spacing:-0.600px;transform:scaleX(0.9923);transform-origin:0 0;-webkit-text-stroke:0.252px currentColor;">13:20</div>
<div class="t" id="r4d" style="left:299.30px;top:539.21px;font-size:12px;font-weight:400;color:#64748b;letter-spacing:-0.293px;-webkit-text-stroke:0.216px currentColor;">Pedido:</div>
<div class="t" id="r4d2" style="left:342.00px;top:539.21px;font-size:12px;font-weight:400;color:#334155;letter-spacing:-0.600px;transform:scaleX(0.9489);transform-origin:0 0;-webkit-text-stroke:0.336px currentColor;">142</div>
<div class="t" id="r4e" style="left:494.00px;top:520.22px;font-size:14px;font-weight:400;color:#2a4a9c;letter-spacing:-0.438px;-webkit-text-stroke:0.392px currentColor;">RAZAO SOCIAL DO CLIENTE</div>
<div class="t" id="r4f" style="left:494.00px;top:539.21px;font-size:12px;font-weight:400;color:#475569;letter-spacing:-0.530px;-webkit-text-stroke:0.336px currentColor;">CNPJ DO CLIENTE</div>
<div class="t" id="r4g" style="left:1039.50px;top:528.42px;font-size:14px;font-weight:700;color:#8a4f9c;letter-spacing:-0.600px;transform:scaleX(0.9435);transform-origin:0 0;">SP</div>
<div class="t" id="r4h" style="left:1199.70px;top:528.42px;font-size:14px;font-weight:400;color:#334155;letter-spacing:-0.600px;transform:scaleX(0.9527);transform-origin:0 0;-webkit-text-stroke:0.252px currentColor;">R$ 3.811,74</div>
<div class="t" id="r5a" style="left:186.30px;top:576.55px;font-size:14px;font-weight:700;color:#334155;letter-spacing:-0.600px;transform:scaleX(0.9980);transform-origin:0 0;">1444</div>
<div class="t" id="r5b" style="left:186.30px;top:596.24px;font-size:12px;font-weight:400;color:#64748b;letter-spacing:-0.356px;-webkit-text-stroke:0.216px currentColor;">Série:</div>
<div class="t" id="r5b2" style="left:218.80px;top:596.24px;font-size:12px;font-weight:400;color:#334155;letter-spacing:-0.212px;-webkit-text-stroke:0.336px currentColor;">001</div>
<div class="t" id="r5c" style="left:299.30px;top:577.25px;font-size:14px;font-weight:400;color:#64748b;letter-spacing:0.007px;-webkit-text-stroke:0.252px currentColor;">08/11/2024</div>
<div class="t" id="r5c2" style="left:372.50px;top:577.25px;font-size:14px;font-weight:400;color:#64748b;letter-spacing:-0.600px;transform:scaleX(0.8675);transform-origin:0 0;-webkit-text-stroke:0.252px currentColor;">13:18</div>
<div class="t" id="r5d" style="left:299.30px;top:596.24px;font-size:12px;font-weight:400;color:#64748b;letter-spacing:-0.293px;-webkit-text-stroke:0.216px currentColor;">Pedido:</div>
<div class="t" id="r5d2" style="left:342.00px;top:596.24px;font-size:12px;font-weight:400;color:#334155;letter-spacing:-0.600px;transform:scaleX(0.9489);transform-origin:0 0;-webkit-text-stroke:0.336px currentColor;">132</div>
<div class="t" id="r5e" style="left:494.00px;top:577.25px;font-size:14px;font-weight:400;color:#2a4a9c;letter-spacing:-0.438px;-webkit-text-stroke:0.392px currentColor;">RAZAO SOCIAL DO CLIENTE</div>
<div class="t" id="r5f" style="left:494.00px;top:596.24px;font-size:12px;font-weight:400;color:#475569;letter-spacing:-0.530px;-webkit-text-stroke:0.336px currentColor;">CNPJ DO CLIENTE</div>
<div class="t" id="r5g" style="left:1039.50px;top:585.45px;font-size:14px;font-weight:700;color:#8a4f9c;letter-spacing:-0.600px;transform:scaleX(0.9218);transform-origin:0 0;">RJ</div>
<div class="t" id="r5h" style="left:1196.00px;top:585.45px;font-size:14px;font-weight:400;color:#334155;letter-spacing:-0.600px;transform:scaleX(0.9914);transform-origin:0 0;-webkit-text-stroke:0.252px currentColor;">R$ 1.243,78</div>
<div class="t" id="r6a" style="left:186.30px;top:633.58px;font-size:14px;font-weight:700;color:#334155;letter-spacing:-0.600px;transform:scaleX(0.9772);transform-origin:0 0;">1443</div>
<div class="t" id="r6b" style="left:186.30px;top:653.27px;font-size:12px;font-weight:400;color:#64748b;letter-spacing:-0.356px;-webkit-text-stroke:0.216px currentColor;">Série:</div>
<div class="t" id="r6b2" style="left:218.80px;top:653.27px;font-size:12px;font-weight:400;color:#334155;letter-spacing:-0.212px;-webkit-text-stroke:0.336px currentColor;">001</div>
<div class="t" id="r6c" style="left:299.30px;top:634.28px;font-size:14px;font-weight:400;color:#64748b;letter-spacing:-0.066px;-webkit-text-stroke:0.252px currentColor;">07/11/2024</div>
<div class="t" id="r6c2" style="left:371.80px;top:634.28px;font-size:14px;font-weight:400;color:#64748b;letter-spacing:-0.600px;transform:scaleX(0.9767);transform-origin:0 0;-webkit-text-stroke:0.252px currentColor;">15:07</div>
<div class="t" id="r6d" style="left:299.30px;top:653.27px;font-size:12px;font-weight:400;color:#64748b;letter-spacing:-0.293px;-webkit-text-stroke:0.216px currentColor;">Pedido:</div>
<div class="t" id="r6d2" style="left:342.00px;top:653.27px;font-size:12px;font-weight:400;color:#334155;letter-spacing:-0.600px;transform:scaleX(0.8282);transform-origin:0 0;-webkit-text-stroke:0.336px currentColor;">131</div>
<div class="t" id="r6e" style="left:494.00px;top:634.28px;font-size:14px;font-weight:400;color:#2a4a9c;letter-spacing:-0.438px;-webkit-text-stroke:0.392px currentColor;">RAZAO SOCIAL DO CLIENTE</div>
<div class="t" id="r6f" style="left:494.00px;top:653.27px;font-size:12px;font-weight:400;color:#475569;letter-spacing:-0.530px;-webkit-text-stroke:0.336px currentColor;">CNPJ DO CLIENTE</div>
<div class="t" id="r6g" style="left:1039.50px;top:642.48px;font-size:14px;font-weight:700;color:#8a4f9c;letter-spacing:-0.600px;transform:scaleX(0.9435);transform-origin:0 0;">SP</div>
<div class="t" id="r6h" style="left:1195.00px;top:642.48px;font-size:14px;font-weight:400;color:#334155;letter-spacing:-0.590px;-webkit-text-stroke:0.252px currentColor;">R$ 2.186,56</div>
<div class="t" id="r7a" style="left:186.30px;top:690.61px;font-size:14px;font-weight:700;color:#334155;letter-spacing:-0.600px;transform:scaleX(0.9772);transform-origin:0 0;">1442</div>
<div class="t" id="r7b" style="left:186.30px;top:710.30px;font-size:12px;font-weight:400;color:#64748b;letter-spacing:-0.356px;-webkit-text-stroke:0.216px currentColor;">Série:</div>
<div class="t" id="r7b2" style="left:218.80px;top:710.30px;font-size:12px;font-weight:400;color:#334155;letter-spacing:-0.212px;-webkit-text-stroke:0.336px currentColor;">001</div>
<div class="t" id="r7c" style="left:299.30px;top:691.31px;font-size:14px;font-weight:400;color:#64748b;letter-spacing:-0.066px;-webkit-text-stroke:0.252px currentColor;">07/11/2024</div>
<div class="t" id="r7c2" style="left:371.80px;top:691.31px;font-size:14px;font-weight:400;color:#64748b;letter-spacing:-0.600px;transform:scaleX(1.0048);transform-origin:0 0;-webkit-text-stroke:0.252px currentColor;">13:40</div>
<div class="t" id="r7d" style="left:299.30px;top:710.30px;font-size:12px;font-weight:400;color:#64748b;letter-spacing:-0.293px;-webkit-text-stroke:0.216px currentColor;">Pedido:</div>
<div class="t" id="r7d2" style="left:342.00px;top:710.30px;font-size:12px;font-weight:400;color:#334155;letter-spacing:-0.600px;transform:scaleX(0.9325);transform-origin:0 0;-webkit-text-stroke:0.336px currentColor;">139</div>
<div class="t" id="r7e" style="left:494.00px;top:691.31px;font-size:14px;font-weight:400;color:#2a4a9c;letter-spacing:-0.438px;-webkit-text-stroke:0.392px currentColor;">RAZAO SOCIAL DO CLIENTE</div>
<div class="t" id="r7f" style="left:494.00px;top:710.30px;font-size:12px;font-weight:400;color:#475569;letter-spacing:-0.530px;-webkit-text-stroke:0.336px currentColor;">CNPJ DO CLIENTE</div>
<div class="t" id="r7g" style="left:1039.50px;top:699.51px;font-size:14px;font-weight:700;color:#8a4f9c;letter-spacing:-0.600px;transform:scaleX(0.9435);transform-origin:0 0;">SP</div>
<div class="t" id="r7h" style="left:1187.00px;top:699.51px;font-size:14px;font-weight:400;color:#334155;letter-spacing:-0.520px;-webkit-text-stroke:0.252px currentColor;">R$ 10.934,89</div>
<div class="t" id="r8a" style="left:186.30px;top:747.64px;font-size:14px;font-weight:700;color:#334155;letter-spacing:-0.600px;transform:scaleX(0.8798);transform-origin:0 0;">1441</div>
<div class="t" id="r8b" style="left:186.30px;top:767.33px;font-size:12px;font-weight:400;color:#64748b;letter-spacing:-0.356px;-webkit-text-stroke:0.216px currentColor;">Série:</div>
<div class="t" id="r8b2" style="left:218.80px;top:767.33px;font-size:12px;font-weight:400;color:#334155;letter-spacing:-0.212px;-webkit-text-stroke:0.336px currentColor;">001</div>
<div class="t" id="r8c" style="left:299.30px;top:748.34px;font-size:14px;font-weight:400;color:#64748b;letter-spacing:-0.066px;-webkit-text-stroke:0.252px currentColor;">07/11/2024</div>
<div class="t" id="r8c2" style="left:371.80px;top:748.34px;font-size:14px;font-weight:400;color:#64748b;letter-spacing:-0.600px;transform:scaleX(0.9486);transform-origin:0 0;-webkit-text-stroke:0.252px currentColor;">13:33</div>
<div class="t" id="r8d" style="left:299.30px;top:767.33px;font-size:12px;font-weight:400;color:#64748b;letter-spacing:-0.293px;-webkit-text-stroke:0.216px currentColor;">Pedido:</div>
<div class="t" id="r8d2" style="left:342.00px;top:767.33px;font-size:12px;font-weight:400;color:#334155;letter-spacing:-0.600px;transform:scaleX(0.8118);transform-origin:0 0;-webkit-text-stroke:0.336px currentColor;">141</div>
<div class="t" id="r8e" style="left:494.00px;top:748.34px;font-size:14px;font-weight:400;color:#2a4a9c;letter-spacing:-0.438px;-webkit-text-stroke:0.392px currentColor;">RAZAO SOCIAL DO CLIENTE</div>
<div class="t" id="r8f" style="left:494.00px;top:767.33px;font-size:12px;font-weight:400;color:#475569;letter-spacing:-0.530px;-webkit-text-stroke:0.336px currentColor;">CNPJ DO CLIENTE</div>
<div class="t" id="r8g" style="left:1039.50px;top:756.54px;font-size:14px;font-weight:700;color:#8a4f9c;letter-spacing:-0.600px;transform:scaleX(0.9218);transform-origin:0 0;">RJ</div>
<div class="t" id="r8h" style="left:1204.00px;top:756.54px;font-size:14px;font-weight:400;color:#334155;letter-spacing:-0.413px;-webkit-text-stroke:0.252px currentColor;">R$ 746,23</div>
<div class="t" id="r9a" style="left:186.30px;top:804.67px;font-size:14px;font-weight:700;color:#334155;letter-spacing:-0.502px;">1440</div>
<div class="t" id="r9b" style="left:186.30px;top:824.36px;font-size:12px;font-weight:400;color:#64748b;letter-spacing:-0.356px;-webkit-text-stroke:0.216px currentColor;">Série:</div>
<div class="t" id="r9b2" style="left:218.80px;top:824.36px;font-size:12px;font-weight:400;color:#334155;letter-spacing:-0.212px;-webkit-text-stroke:0.336px currentColor;">001</div>
<div class="t" id="r9c" style="left:299.30px;top:805.37px;font-size:14px;font-weight:400;color:#64748b;letter-spacing:0.007px;-webkit-text-stroke:0.252px currentColor;">06/11/2024</div>
<div class="t" id="r9c2" style="left:372.50px;top:805.37px;font-size:14px;font-weight:400;color:#64748b;letter-spacing:-0.600px;transform:scaleX(0.9455);transform-origin:0 0;-webkit-text-stroke:0.252px currentColor;">14:10</div>
<div class="t" id="r9d" style="left:299.30px;top:824.36px;font-size:12px;font-weight:400;color:#64748b;letter-spacing:-0.293px;-webkit-text-stroke:0.216px currentColor;">Pedido:</div>
<div class="t" id="r9d2" style="left:342.00px;top:824.36px;font-size:12px;font-weight:400;color:#334155;letter-spacing:-0.600px;transform:scaleX(0.9160);transform-origin:0 0;-webkit-text-stroke:0.336px currentColor;">138</div>
<div class="t" id="r9e" style="left:494.00px;top:805.37px;font-size:14px;font-weight:400;color:#2a4a9c;letter-spacing:-0.438px;-webkit-text-stroke:0.392px currentColor;">RAZAO SOCIAL DO CLIENTE</div>
<div class="t" id="r9f" style="left:494.00px;top:824.36px;font-size:12px;font-weight:400;color:#475569;letter-spacing:-0.530px;-webkit-text-stroke:0.336px currentColor;">CNPJ DO CLIENTE</div>
<div class="t" id="r9g" style="left:1039.50px;top:813.57px;font-size:14px;font-weight:700;color:#8a4f9c;letter-spacing:-0.600px;transform:scaleX(0.9435);transform-origin:0 0;">SP</div>
<div class="t" id="r9h" style="left:1192.00px;top:813.57px;font-size:14px;font-weight:400;color:#334155;letter-spacing:-0.304px;-webkit-text-stroke:0.252px currentColor;">R$ 4.392,46</div>
</div>
<!-- cursor -->
<svg class="i" style="left:1420px;top:195px" width="54" height="66" viewBox="1420 195 54 66" fill="#fff" stroke="#000" stroke-width="1.900" stroke-linejoin="round" stroke-linecap="round">
<path d="M1437,232 L1437,204.500 A4.300,4.300 0 0 1 1445.600,204.500 L1445.600,215.500 C1446.500,213.800 1452.500,213 1453.900,217.200 L1453.900,219.500 C1455,217.300 1460.300,217.500 1461,221.200 L1461,223 C1462.500,220.800 1468.700,221.500 1468.700,227 L1468.700,240 C1468.700,250 1462,257 1453,257 C1446.500,257 1442,252.500 1438,247 L1426,231.500 C1423,228 1427,223.500 1430.500,226.500 Z"/>
<path d="M1445.600,215 V220.500 M1453.900,219 V224.500 M1461,223 V228" fill="none"/>
</svg>
</body></html>
